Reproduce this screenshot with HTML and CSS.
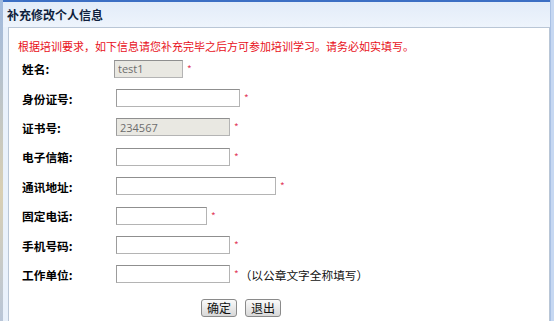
FILE: index.html
```html
<!DOCTYPE html>
<html lang="zh-CN">
<head>
    <meta charset="UTF-8">
    <title>补充修改个人信息</title>
    <link rel="stylesheet" href="styles.css">
</head>
<body>
    <div class="frame">
        <div class="side-left"></div>
        <div class="main">
            <div class="title-bar">补充修改个人信息</div>
            <div class="panel">
                <div class="box">
                    <p class="notice">根据培训要求，如下信息请您补充完毕之后方可参加培训学习。请务必如实填写。</p>

                    <form class="info-form">
                        <div class="row">
                            <label>姓名:</label>
                            <div class="field">
                                <input type="text" class="readonly w-name" value="test1" readonly>
                                <span class="req">*</span>
                            </div>
                        </div>
                        <div class="row">
                            <label>身份证号:</label>
                            <div class="field">
                                <input type="text" class="w-id">
                                <span class="req">*</span>
                            </div>
                        </div>
                        <div class="row">
                            <label>证书号:</label>
                            <div class="field">
                                <input type="text" class="readonly w-mid" value="234567" readonly>
                                <span class="req">*</span>
                            </div>
                        </div>
                        <div class="row">
                            <label>电子信箱:</label>
                            <div class="field">
                                <input type="text" class="w-mid">
                                <span class="req">*</span>
                            </div>
                        </div>
                        <div class="row">
                            <label>通讯地址:</label>
                            <div class="field">
                                <input type="text" class="w-addr">
                                <span class="req">*</span>
                            </div>
                        </div>
                        <div class="row">
                            <label>固定电话:</label>
                            <div class="field">
                                <input type="text" class="w-tel">
                                <span class="req">*</span>
                            </div>
                        </div>
                        <div class="row">
                            <label>手机号码:</label>
                            <div class="field">
                                <input type="text" class="w-mid">
                                <span class="req">*</span>
                            </div>
                        </div>
                        <div class="row">
                            <label>工作单位:</label>
                            <div class="field">
                                <input type="text" class="w-mid">
                                <span class="req">*</span>
                                <span class="hint">（以公章文字全称填写）</span>
                            </div>
                        </div>

                        <div class="actions">
                            <button type="submit">确定</button>
                            <button type="button">退出</button>
                        </div>
                    </form>
                </div>
            </div>
        </div>
        <div class="side-right"></div>
    </div>
</body>
</html>
```

FILE: styles.css
```css
* {
    margin: 0;
    padding: 0;
    box-sizing: border-box;
}

body {
    font-family: "Noto Sans CJK SC", "DejaVu Sans", sans-serif;
    background-color: #ffffff;
    width: 554px;
    height: 321px;
    overflow: hidden;
}

.frame {
    display: flex;
    height: 321px;
}

.side-left {
    width: 3px;
    background: linear-gradient(#9fb9de, #d9cfb3 60%, #b9c6d8);
}

.side-right {
    width: 4px;
    background-color: #c6d8f2;
    border-left: 1px solid #a8c0e4;
}

.main {
    flex: 1;
    display: flex;
    flex-direction: column;
    border-top: 2px solid #3c6fc4;
    background-color: #e9f1fb;
}

.title-bar {
    height: 25px;
    padding-left: 4px;
    font-size: 12px;
    font-weight: bold;
    line-height: 25px;
    color: #0f1f3d;
    background: linear-gradient(#e2ecf9, #eef4fc);
}

.panel {
    flex: 1;
    padding-left: 5px;
}

.box {
    height: 100%;
    background-color: #ffffff;
    border: 1px solid #b9c6d6;
    border-bottom: none;
}

.notice {
    font-size: 11px;
    line-height: 14px;
    color: #e8101a;
    padding: 11px 0 0 9px;
    height: 26px;
}

.info-form {
    padding-left: 13px;
}

.row {
    display: flex;
    align-items: center;
    height: 29.4px;
}

.row label {
    width: 94px;
    font-size: 11.7px;
    font-weight: bold;
    color: #000000;
}

.field {
    display: flex;
    align-items: center;
    font-size: 11.7px;
    color: #111111;
}

input {
    height: 18px;
    border: 1px solid #b4b4b4;
    border-top-color: #8f8f8f;
    border-left-color: #9c9c9c;
    background-color: #ffffff;
    font-family: "Open Sans", "DejaVu Sans", sans-serif;
    font-size: 11px;
    color: #6d6d6d;
    padding: 0 3px;
    outline: none;
}

input.readonly {
    background-color: #e9e8e2;
}

.w-name { width: 69px; margin-left: -2px; }
.w-id { width: 124px; }
.w-mid { width: 114px; }
.w-addr { width: 160px; }
.w-tel { width: 91px; }

.req {
    color: #e23d5c;
    font-size: 10px;
    margin: 0 0 0 4px;
    line-height: 12px;
}

.hint {
    margin-left: 1px;
}

.actions {
    display: flex;
    gap: 8px;
    padding: 10px 0 0 179px;
}

button {
    height: 18px;
    padding: 0 5px;
    font-family: "Noto Sans CJK SC", sans-serif;
    font-size: 12px;
    line-height: 16px;
    color: #111111;
    background: linear-gradient(#fafafa, #d8d8d8);
    border: 1px solid #8a8a8a;
    border-radius: 3px;
    cursor: pointer;
}
```
